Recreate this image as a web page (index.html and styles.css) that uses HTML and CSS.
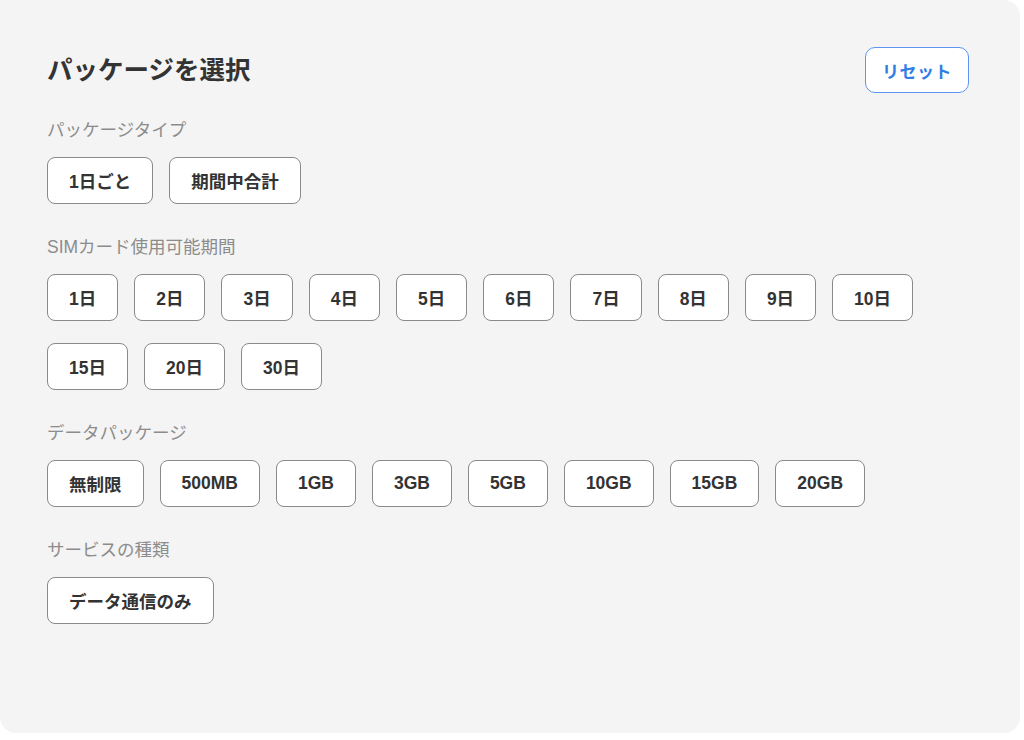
FILE: index.html
```html
<!DOCTYPE html>
<html lang="ja">
<head>
<meta charset="utf-8">
<title>パッケージを選択</title>
<link rel="stylesheet" href="styles.css">
</head>
<body>
<div class="card">
  <div class="header">
    <h1 class="title">パッケージを選択</h1>
    <button class="reset">リセット</button>
  </div>

  <section class="section first">
    <div class="label">パッケージタイプ</div>
    <div class="options">
      <button class="opt">1日ごと</button>
      <button class="opt">期間中合計</button>
    </div>
  </section>

  <section class="section">
    <div class="label">SIMカード使用可能期間</div>
    <div class="options">
      <button class="opt">1日</button>
      <button class="opt">2日</button>
      <button class="opt">3日</button>
      <button class="opt">4日</button>
      <button class="opt">5日</button>
      <button class="opt">6日</button>
      <button class="opt">7日</button>
      <button class="opt">8日</button>
      <button class="opt">9日</button>
      <button class="opt">10日</button>
      <button class="opt">15日</button>
      <button class="opt">20日</button>
      <button class="opt">30日</button>
    </div>
  </section>

  <section class="section">
    <div class="label">データパッケージ</div>
    <div class="options">
      <button class="opt">無制限</button>
      <button class="opt">500MB</button>
      <button class="opt">1GB</button>
      <button class="opt">3GB</button>
      <button class="opt">5GB</button>
      <button class="opt">10GB</button>
      <button class="opt">15GB</button>
      <button class="opt">20GB</button>
    </div>
  </section>

  <section class="section">
    <div class="label">サービスの種類</div>
    <div class="options">
      <button class="opt">データ通信のみ</button>
    </div>
  </section>
</div>
</body>
</html>
```

FILE: styles.css
```css
* { box-sizing: border-box; }
html, body {
  margin: 0;
  padding: 0;
  background: #ffffff;
}
body {
  font-family: "Liberation Sans", "Noto Sans CJK JP", sans-serif;
  color: #333333;
}
.card {
  width: 1020px;
  height: 733px;
  background: #f4f4f4;
  border-radius: 0 16px 16px 16px;
  padding: 47px 51px 0 47px;
}
.header {
  display: flex;
  align-items: center;
  justify-content: space-between;
  height: 46px;
}
.title {
  margin: 0;
  font-size: 25.5px;
  font-weight: 700;
  color: #333333;
  line-height: 32px;
}
.reset {
  height: 46px;
  width: 104px;
  background: #ffffff;
  border: 1px solid #5b97f2;
  border-radius: 10px;
  color: #2f7de6;
  font-family: inherit;
  font-size: 17px;
  font-weight: 700;
  letter-spacing: 0.5px;
  padding: 0;
}
.section { margin-top: 31px; }
.section.first { margin-top: 25px; }
.label {
  font-size: 17.5px;
  line-height: 24px;
  color: #8c8c8c;
  margin-bottom: 15px;
}
.options {
  display: flex;
  flex-wrap: wrap;
  column-gap: 16px;
  row-gap: 22px;
  max-width: 880px;
}
.opt {
  height: 47px;
  padding: 0 21px;
  background: #ffffff;
  border: 1px solid #8a8a8a;
  border-radius: 8px;
  font-family: inherit;
  font-size: 17.5px;
  font-weight: 700;
  color: #333333;
}
```
